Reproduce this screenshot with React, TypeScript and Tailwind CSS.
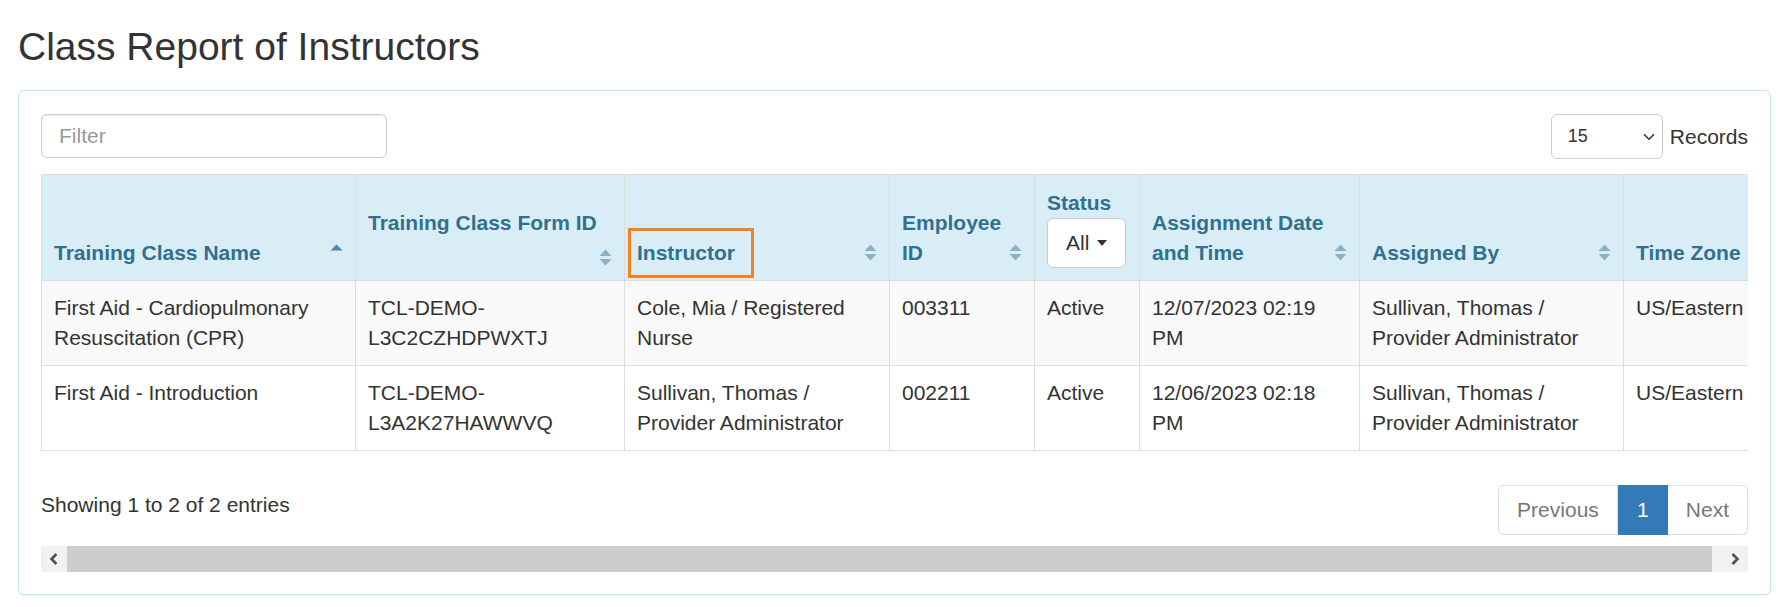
import React from "react";

const SortBoth = ({ bottom }: { bottom: string }) => (
  <svg
    className={`absolute right-[12px] ${bottom}`}
    width="13"
    height="17"
    viewBox="0 0 13 17"
  >
    <polygon points="0.5,7 6.5,0.5 12.5,7" fill="#8ab1c5" />
    <polygon points="0.5,10 12.5,10 6.5,16.5" fill="#8ab1c5" />
  </svg>
);

const SortAsc = () => (
  <svg
    className="absolute right-[12px] bottom-[29px]"
    width="13"
    height="7"
    viewBox="0 0 13 7"
  >
    <polygon points="0.5,6.5 6.5,0.5 12.5,6.5" fill="#4f88a6" />
  </svg>
);

const th =
  "relative border border-[#dddddd] bg-[#d9edf7] px-[12px] pt-[13px] pb-[12px] text-left align-bottom text-[21px] leading-[30px] font-bold text-[#31708f]";
const td =
  "border border-[#dddddd] p-[12px] align-top text-[21px] leading-[30px] text-[#333333]";

const rows = [
  {
    bg: "bg-[#f9f9f9]",
    cells: [
      "First Aid - Cardiopulmonary Resuscitation (CPR)",
      "TCL-DEMO-L3C2CZHDPWXTJ",
      "Cole, Mia / Registered Nurse",
      "003311",
      "Active",
      "12/07/2023 02:19 PM",
      "Sullivan, Thomas / Provider Administrator",
      "US/Eastern",
    ],
  },
  {
    bg: "bg-white",
    cells: [
      "First Aid - Introduction",
      "TCL-DEMO-L3A2K27HAWWVQ",
      "Sullivan, Thomas / Provider Administrator",
      "002211",
      "Active",
      "12/06/2023 02:18 PM",
      "Sullivan, Thomas / Provider Administrator",
      "US/Eastern",
    ],
  },
];

export default function App() {
  return (
    <div className="min-h-[607px] w-[1787px] bg-white font-['Liberation_Sans',Arial,sans-serif] text-[#333333]">
      <div className="pl-[18px] pt-[25px]">
        <h1 className="text-[39px] leading-[43px] font-normal">
          Class Report of Instructors
        </h1>
        <div className="mt-[22px] w-[1753px] rounded-[6px] border border-[#bce8f1] bg-white px-[22px] pt-[23px] pb-[22px] shadow-[0_1px_1px_rgba(0,0,0,0.05)]">
          {/* top row */}
          <div className="flex h-[45px] items-start justify-between">
            <input
              placeholder="Filter"
              className="h-[44px] w-[346px] rounded-[6px] border border-[#cccccc] px-[17px] text-[21px] text-[#555555] shadow-[inset_0_1px_1px_rgba(0,0,0,0.075)] outline-none placeholder:text-[#999999]"
            />
            <div className="flex items-center gap-[7px]">
              <div className="flex h-[45px] w-[112px] items-center justify-between rounded-[6px] border border-[#cccccc] bg-white pl-[16px] pr-[7px]">
                <span className="text-[18px] text-[#333333]">15</span>
                <svg width="12" height="8" viewBox="0 0 12 8">
                  <path
                    d="M1 1.2 L6 6.2 L11 1.2"
                    fill="none"
                    stroke="#333333"
                    strokeWidth="1.6"
                  />
                </svg>
              </div>
              <span className="text-[21px] leading-[30px]">Records</span>
            </div>
          </div>

          {/* table */}
          <div className="mt-[15px] w-full overflow-hidden">
            <table className="w-[1782px] table-fixed border-collapse">
              <thead>
                <tr>
                  <th className={`${th} w-[314px]`}>
                    Training Class Name
                    <SortAsc />
                  </th>
                  <th className={`${th} w-[269px]`}>
                    <div>Training Class Form ID</div>
                    <div className="h-[30px]"></div>
                    <SortBoth bottom="bottom-[14px]" />
                  </th>
                  <th className={`${th} w-[265px]`}>
                    Instructor
                    <div className="pointer-events-none absolute left-[3px] top-[53px] h-[50px] w-[126px] border-[3px] border-[#f5821f]"></div>
                    <SortBoth bottom="bottom-[19px]" />
                  </th>
                  <th className={`${th} w-[145px]`}>
                    Employee ID
                    <SortBoth bottom="bottom-[19px]" />
                  </th>
                  <th className={`${th} w-[105px]`}>
                    <div>Status</div>
                    <div className="inline-flex h-[50px] items-center rounded-[6px] border border-[#cccccc] bg-white px-[18px] font-normal text-[#333333]">
                      <span>All</span>
                      <span className="ml-[8px] h-0 w-0 border-x-[5px] border-t-[6px] border-x-transparent border-t-[#333333]"></span>
                    </div>
                  </th>
                  <th className={`${th} w-[220px]`}>
                    Assignment Date and Time
                    <SortBoth bottom="bottom-[19px]" />
                  </th>
                  <th className={`${th} w-[264px]`}>
                    Assigned By
                    <SortBoth bottom="bottom-[19px]" />
                  </th>
                  <th className={`${th} w-[200px]`}>Time Zone</th>
                </tr>
              </thead>
              <tbody>
                {rows.map((r, i) => (
                  <tr key={i} className={r.bg}>
                    {r.cells.map((c, j) => (
                      <td key={j} className={td}>
                        {c}
                      </td>
                    ))}
                  </tr>
                ))}
              </tbody>
            </table>
          </div>

          {/* footer */}
          <div className="mt-[34px] flex items-start justify-between">
            <div className="pt-[5px] text-[21px] leading-[30px]">
              Showing 1 to 2 of 2 entries
            </div>
            <div className="flex h-[50px] text-[21px] leading-[30px]">
              <div className="flex items-center rounded-l-[6px] border border-[#dddddd] bg-white px-[18px] text-[#777777]">
                Previous
              </div>
              <div className="flex w-[50px] items-center justify-center border border-[#337ab7] bg-[#337ab7] text-white">
                1
              </div>
              <div className="flex items-center rounded-r-[6px] border border-l-0 border-[#dddddd] bg-white px-[18px] text-[#777777]">
                Next
              </div>
            </div>
          </div>

          {/* scrollbar */}
          <div className="mt-[11px] flex h-[26px] w-full">
            <div className="flex w-[26px] items-center justify-center bg-[#f1f1f1]">
              <svg width="10" height="12" viewBox="0 0 10 12">
                <path
                  d="M7.5 1 L2.5 6 L7.5 11"
                  fill="none"
                  stroke="#505050"
                  strokeWidth="2.6"
                />
              </svg>
            </div>
            <div className="flex-1 bg-[#cdcdcd]"></div>
            <div className="flex w-[36px] items-center justify-end bg-[#f1f1f1] pr-[8px]">
              <svg width="10" height="12" viewBox="0 0 10 12">
                <path
                  d="M2.5 1 L7.5 6 L2.5 11"
                  fill="none"
                  stroke="#505050"
                  strokeWidth="2.6"
                />
              </svg>
            </div>
          </div>
        </div>
      </div>
    </div>
  );
}
